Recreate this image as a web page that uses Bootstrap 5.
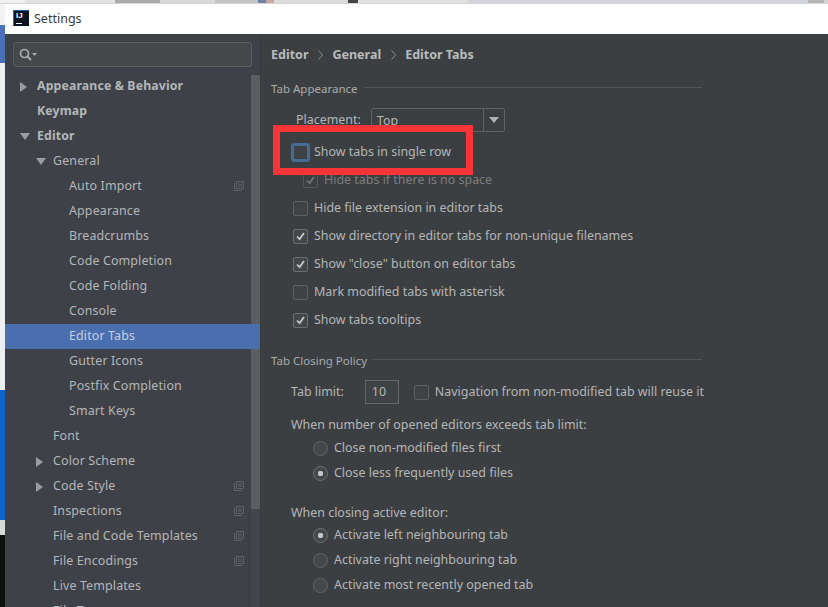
<!DOCTYPE html>
<html lang="en">
<head>
<meta charset="utf-8">
<title>Settings</title>
<link href="https://cdn.jsdelivr.net/npm/bootstrap@5.3.0/dist/css/bootstrap.min.css" rel="stylesheet">
<style>
html,body{height:607px;overflow:hidden}
body{font-family:"Noto Sans","Open Sans",sans-serif;font-size:12.45px;color:#b4b6b8;background:#fff}
.strip-top{height:4px;background:#d6d6d6;overflow:hidden}
.strip-top span{display:block;height:3px;flex:none}
.strip-top .tx{width:25px;background:#f1f1f1}
.strip-top .t1{width:90px;background:#e2e2e2}
.strip-top .t2{width:45px;background:#ababab}
.strip-top .t3{width:55px;background:#d8d8d8}
.strip-top .t4{width:43px;background:#c4c4c4}
.strip-top .t5{width:8px;background:#6f83a8}
.strip-top .t6{width:8px;background:#c8a8a0}
.strip-top .t7{width:74px;background:#dcdcdc}
.strip-top .t8{width:10px;background:#444}
.strip-top .t9{width:110px;background:#e0e0e0}
.strip-top .t10{width:340px;background:#cfd2d6}
.strip-top .t11{width:16px;background:#b4b4b4}
.stage{height:603px}
.strip-left{width:5px;flex:none}
.strip-left i{display:block}
.s1{height:21px;background:#f0f2f4}
.s2{height:38px;background:#4a70b8}
.s3{height:327px;background:#eceef0}
.s4{height:130px;background:#0d63c9}
.s5{height:15px;background:#d8d8d8}
.s6{height:72px;background:#0f0f0f}
.ide{min-width:0}
.titlebar{height:30px;background:#fff;color:#3a3a3a;font-size:12.5px;padding:0 0 2px 8px;gap:5px}
.titlebar .ttl{padding-top:2px}
.ij{width:16px;height:16px;background:#0c1424;border-left:1px solid #1c6fb8;border-top:1px solid #1c5fa8;color:#fff;font:700 8px/8px "Liberation Sans",sans-serif;padding:1px 0 0 2px;position:relative;flex:none}
.ij::after{content:"";position:absolute;left:2px;bottom:2px;width:6px;height:1px;background:#fff}
.panes{height:573px}
.side{width:255px;flex:none;background:#3e4147;position:relative;overflow:hidden}
.searchbox{margin:8px 8px 0 8px;height:25px;width:239px;background:#45484a;border:1px solid #5b5e5e;border-radius:3px;padding-left:5px}
.tree{margin-top:7px;background:transparent;border-radius:0}
.tree .list-group-item{height:25px;margin-top:0;padding:0;border:0;background:transparent;color:#b4b6b8;display:flex;align-items:center;position:relative;font-size:12.45px;letter-spacing:.13px}
.tree .list-group-item.active{background:#4b6eaf;color:#c3cede;margin-top:0}
.tree .strong{font-weight:700;font-size:12.3px}
.lv0{padding-left:32px!important}
.lv1{padding-left:48px!important}
.lv2{padding-left:64px!important}
.arr{position:absolute;width:0;height:0}
.arr-r{border-left:7px solid #9b9ea1;border-top:5px solid transparent;border-bottom:5px solid transparent}
.arr-d{border-top:7px solid #9b9ea1;border-left:5px solid transparent;border-right:5px solid transparent}
.at0{left:15px}
.at1{left:31px}
.cp{position:absolute;left:229px;top:7px;width:10px;height:10px}
.thumb{position:absolute;left:246px;top:41px;width:9px;height:434px;background:rgba(255,255,255,.13)}
.rail{position:absolute;left:246px;top:41px;bottom:0;width:9px;background:rgba(255,255,255,.025)}
.pane-main{background:#3c3f41;position:relative;padding-left:10px;overflow:hidden;border-left:1px solid #37393b;min-width:0}
.crumb{height:40px;font-weight:700;font-size:12.5px;color:#b9bbbd;padding-top:2px}
.crumb svg{margin:0 9px 0 10px}
.grp{height:20px;font-size:11.5px;color:#a9abad;width:431px;gap:6px}
.grp::after{content:"";flex:1;border-top:1px solid #515354;margin-top:-4px}
.mt5{margin-top:5px}
.ind{padding-left:20px}
.row-h{height:28px}
.rad-h{height:25px}
.lab-h{height:20px}
.combo{height:24px;width:134px;border:1px solid #606364;border-radius:2px;margin-left:10px;background:#3c3f41}
.combo .val{flex:1;padding-left:5px;padding-top:2px}
.combo .btnarr{width:21px;height:100%;border-left:1px solid #606364}
.tri{width:0;height:0;border-top:6px solid #b0b2b4;border-left:5px solid transparent;border-right:5px solid transparent}
.limit{width:34px;height:24px;border:1px solid #646768;margin-left:21px;padding-left:6px;background:#404345;color:#b4b6b8}
.form-check-input.ck,.form-check-input.rd{width:15px;height:15px;margin:0;flex:none;background-color:#3f4244;border:1px solid #5f6263;opacity:1}
.form-check-input.ck{border-radius:2px}
.form-check-input.ck:checked{background-color:#43474a;border-color:#6b6e70;background-image:url("data:image/svg+xml,%3csvg xmlns='http://www.w3.org/2000/svg' viewBox='0 0 15 15'%3e%3cpath fill='none' stroke='%23c9cbcd' stroke-width='2' d='M3.5 7.5l3 3 5-7'/%3e%3c/svg%3e")}
.form-check-input.rd{background-color:#45484a;border-color:#626566}
.form-check-input.rd:checked{background-color:#45484a;border-color:#6e7173;background-image:radial-gradient(circle,#c4c6c8 0 2.5px,transparent 3px)}
.form-check-input.ck:disabled:checked{background-color:#3c3f41;border-color:#555758;background-image:url("data:image/svg+xml,%3csvg xmlns='http://www.w3.org/2000/svg' viewBox='0 0 15 15'%3e%3cpath fill='none' stroke='%23717375' stroke-width='2' d='M3.5 7.5l3 3 5-7'/%3e%3c/svg%3e")}
.form-check-input.foc{width:19px;height:19px;margin-left:-2px;margin-right:-2px;border:3px solid #456c93;background-color:#3f4244;border-radius:3px;box-shadow:none}
.form-check-input.navchk{margin:0 6px 0 15px}
.opt{padding-left:22px;gap:6px}
.opt2{padding-left:32px;gap:6px}
.opt3{padding-left:42px;gap:6px}
.dim{color:#7b7d7f}
.redbox{position:absolute;left:12px;top:91px;width:200px;height:50px;border:7px solid #f83436;pointer-events:none}
</style>
</head>
<body>
<svg width="0" height="0" class="position-absolute">
  <symbol id="copyic" viewBox="0 0 10 10"><path fill="none" stroke="#5f6265" d="M.5 2v7.500h7.500M2.500 .5h7v7h-7z"/><path stroke="#5f6265" d="M4 3h4M4 5h4"/></symbol>
  <symbol id="chev" viewBox="0 0 5 10"><path fill="none" stroke="#8a8c8e" d="M.5 .5l4 4.500-4 4.500"/></symbol>
</svg>
<div class="strip-top d-flex">
  <span class="tx"></span><span class="t1"></span><span class="t2"></span><span class="t3"></span><span class="t4"></span><span class="t5"></span><span class="t6"></span><span class="t7"></span><span class="t8"></span><span class="t9"></span><span class="t10"></span><span class="t11"></span>
</div>
<div class="stage d-flex">
  <div class="strip-left d-flex flex-column"><i class="s1"></i><i class="s2"></i><i class="s3"></i><i class="s4"></i><i class="s5"></i><i class="s6"></i></div>
  <div class="ide flex-grow-1">
    <div class="titlebar d-flex align-items-center"><span class="ij">IJ</span><span class="ttl">Settings</span></div>
    <div class="panes d-flex">
      <aside class="side">
        <div class="searchbox d-flex align-items-center">
          <svg width="18" height="14" viewBox="0 0 18 14"><circle cx="5.500" cy="5.500" r="4" fill="none" stroke="#a9abad" stroke-width="1.700"/><path d="M8.500 8.500l3.500 3.500" stroke="#a9abad" stroke-width="2"/><path d="M13 5h5l-2.500 3z" fill="#a9abad"/></svg>
        </div>
        <div class="list-group list-group-flush tree">
          <div class="list-group-item lv0 strong"><i class="arr arr-r at0"></i>Appearance &amp; Behavior</div>
          <div class="list-group-item lv0 strong">Keymap</div>
          <div class="list-group-item lv0 strong"><i class="arr arr-d at0"></i>Editor</div>
          <div class="list-group-item lv1"><i class="arr arr-d at1"></i>General</div>
          <div class="list-group-item lv2">Auto Import<svg class="cp"><use href="#copyic"/></svg></div>
          <div class="list-group-item lv2">Appearance</div>
          <div class="list-group-item lv2">Breadcrumbs</div>
          <div class="list-group-item lv2">Code Completion</div>
          <div class="list-group-item lv2">Code Folding</div>
          <div class="list-group-item lv2">Console</div>
          <div class="list-group-item lv2 active">Editor Tabs</div>
          <div class="list-group-item lv2">Gutter Icons</div>
          <div class="list-group-item lv2">Postfix Completion</div>
          <div class="list-group-item lv2">Smart Keys</div>
          <div class="list-group-item lv1">Font</div>
          <div class="list-group-item lv1"><i class="arr arr-r at1"></i>Color Scheme</div>
          <div class="list-group-item lv1"><i class="arr arr-r at1"></i>Code Style<svg class="cp"><use href="#copyic"/></svg></div>
          <div class="list-group-item lv1">Inspections<svg class="cp"><use href="#copyic"/></svg></div>
          <div class="list-group-item lv1">File and Code Templates<svg class="cp"><use href="#copyic"/></svg></div>
          <div class="list-group-item lv1">File Encodings<svg class="cp"><use href="#copyic"/></svg></div>
          <div class="list-group-item lv1">Live Templates</div>
          <div class="list-group-item lv1">File Types</div>
        </div>
        <div class="rail"></div>
        <div class="thumb"></div>
      </aside>
      <main class="pane-main flex-grow-1">
        <div class="crumb d-flex align-items-center"><span>Editor</span><svg width="5" height="10"><use href="#chev"/></svg><span>General</span><svg width="5" height="10"><use href="#chev"/></svg><span>Editor Tabs</span></div>
        <div class="grp d-flex align-items-center mt5">Tab Appearance</div>
        <div class="ind d-flex align-items-center" style="margin-top:9px;padding-left:25px">
          <span>Placement:</span>
          <div class="combo d-flex align-items-center"><span class="val">Top</span><span class="btnarr d-flex align-items-center justify-content-center"><span class="tri"></span></span></div>
        </div>
        <div class="row-h opt d-flex align-items-center" style="margin-top:6px"><input class="form-check-input ck foc" type="checkbox" aria-label="Show tabs in single row"><span>Show tabs in single row</span></div>
        <div class="row-h opt2 d-flex align-items-center dim"><input class="form-check-input ck" type="checkbox" checked disabled aria-label="Hide tabs"><span>Hide tabs if there is no space</span></div>
        <div class="row-h opt d-flex align-items-center"><input class="form-check-input ck" type="checkbox" aria-label="Hide file extension"><span>Hide file extension in editor tabs</span></div>
        <div class="row-h opt d-flex align-items-center"><input class="form-check-input ck" type="checkbox" checked aria-label="Show directory"><span>Show directory in editor tabs for non-unique filenames</span></div>
        <div class="row-h opt d-flex align-items-center"><input class="form-check-input ck" type="checkbox" checked aria-label="Show close"><span>Show "close" button on editor tabs</span></div>
        <div class="row-h opt d-flex align-items-center"><input class="form-check-input ck" type="checkbox" aria-label="Mark modified"><span>Mark modified tabs with asterisk</span></div>
        <div class="row-h opt d-flex align-items-center"><input class="form-check-input ck" type="checkbox" checked aria-label="Show tooltips"><span>Show tabs tooltips</span></div>
        <div class="grp d-flex align-items-center" style="margin-top:17px">Tab Closing Policy</div>
        <div class="ind d-flex align-items-center" style="margin-top:9px">
          <span>Tab limit:</span><span class="limit d-flex align-items-center">10</span>
          <input class="form-check-input ck navchk" type="checkbox" aria-label="Navigation"><span class="text-nowrap">Navigation from non-modified tab will reuse it</span>
        </div>
        <div class="ind lab-h d-flex align-items-center" style="margin-top:11px">When number of opened editors exceeds tab limit:</div>
        <div class="rad-h opt3 d-flex align-items-center" style="margin-top:1px"><input class="form-check-input rd" type="radio" name="a" aria-label="a"><span>Close non-modified files first</span></div>
        <div class="rad-h opt3 d-flex align-items-center"><input class="form-check-input rd" type="radio" name="a" checked aria-label="b"><span>Close less frequently used files</span></div>
        <div class="ind lab-h d-flex align-items-center" style="margin-top:17px">When closing active editor:</div>
        <div class="rad-h opt3 d-flex align-items-center"><input class="form-check-input rd" type="radio" name="b" checked aria-label="c"><span>Activate left neighbouring tab</span></div>
        <div class="rad-h opt3 d-flex align-items-center"><input class="form-check-input rd" type="radio" name="b" aria-label="d"><span>Activate right neighbouring tab</span></div>
        <div class="rad-h opt3 d-flex align-items-center"><input class="form-check-input rd" type="radio" name="b" aria-label="e"><span>Activate most recently opened tab</span></div>
        <div class="redbox"></div>
      </main>
    </div>
  </div>
</div>
</body>
</html>
